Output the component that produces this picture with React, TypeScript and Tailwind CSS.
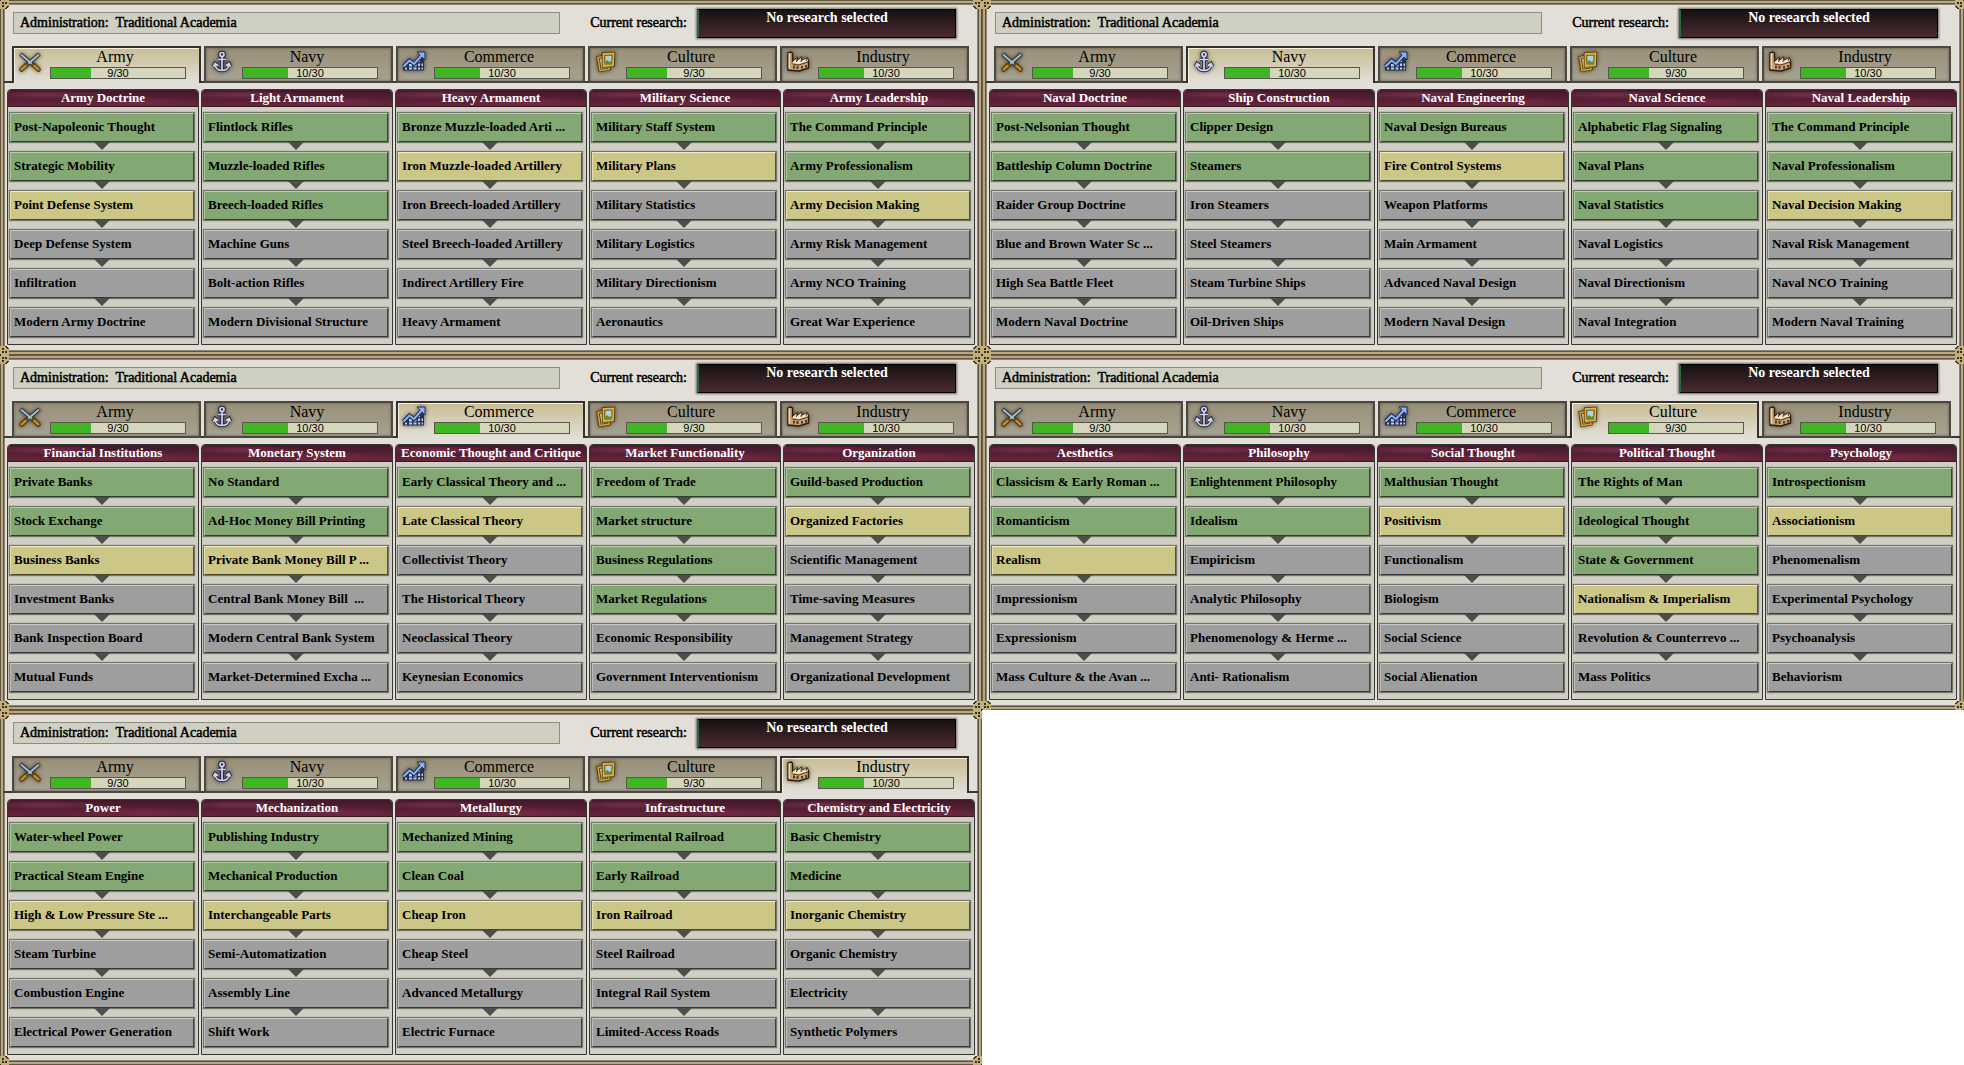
import React from 'react';

type Status = 'g' | 'y' | 'n';
type Column = { title: string; done: number; current: boolean; items: string[] };

const col = (title: string, done: number, current: boolean, ...items: string[]): Column => ({ title, done, current, items });

const tabs = [
  { name: 'Army', count: 9 },
  { name: 'Navy', count: 10 },
  { name: 'Commerce', count: 10 },
  { name: 'Culture', count: 9 },
  { name: 'Industry', count: 10 },
];

const panels: Column[][] = [
  [
    col('Army Doctrine', 2, true, 'Post-Napoleonic Thought', 'Strategic Mobility', 'Point Defense System', 'Deep Defense System', 'Infiltration', 'Modern Army Doctrine'),
    col('Light Armament', 3, false, 'Flintlock Rifles', 'Muzzle-loaded Rifles', 'Breech-loaded Rifles', 'Machine Guns', 'Bolt-action Rifles', 'Modern Divisional Structure'),
    col('Heavy Armament', 1, true, 'Bronze Muzzle-loaded Arti ...', 'Iron Muzzle-loaded Artillery', 'Iron Breech-loaded Artillery', 'Steel Breech-loaded Artillery', 'Indirect Artillery Fire', 'Heavy Armament'),
    col('Military Science', 1, true, 'Military Staff System', 'Military Plans', 'Military Statistics', 'Military Logistics', 'Military Directionism', 'Aeronautics'),
    col('Army Leadership', 2, true, 'The Command Principle', 'Army Professionalism', 'Army Decision Making', 'Army Risk Management', 'Army NCO Training', 'Great War Experience'),
  ],
  [
    col('Naval Doctrine', 2, false, 'Post-Nelsonian Thought', 'Battleship Column Doctrine', 'Raider Group Doctrine', 'Blue and Brown Water Sc ...', 'High Sea Battle Fleet', 'Modern Naval Doctrine'),
    col('Ship Construction', 2, false, 'Clipper Design', 'Steamers', 'Iron Steamers', 'Steel Steamers', 'Steam Turbine Ships', 'Oil-Driven Ships'),
    col('Naval Engineering', 1, true, 'Naval Design Bureaus', 'Fire Control Systems', 'Weapon Platforms', 'Main Armament', 'Advanced Naval Design', 'Modern Naval Design'),
    col('Naval Science', 3, false, 'Alphabetic Flag Signaling', 'Naval Plans', 'Naval Statistics', 'Naval Logistics', 'Naval Directionism', 'Naval Integration'),
    col('Naval Leadership', 2, true, 'The Command Principle', 'Naval Professionalism', 'Naval Decision Making', 'Naval Risk Management', 'Naval NCO Training', 'Modern Naval Training'),
  ],
  [
    col('Financial Institutions', 2, true, 'Private Banks', 'Stock Exchange', 'Business Banks', 'Investment Banks', 'Bank Inspection Board', 'Mutual Funds'),
    col('Monetary System', 2, true, 'No Standard', 'Ad-Hoc Money Bill Printing', 'Private Bank Money Bill P ...', 'Central Bank Money Bill  ...', 'Modern Central Bank System', 'Market-Determined Excha ...'),
    col('Economic Thought and Critique', 1, true, 'Early Classical Theory and ...', 'Late Classical Theory', 'Collectivist Theory', 'The Historical Theory', 'Neoclassical Theory', 'Keynesian Economics'),
    col('Market Functionality', 4, false, 'Freedom of Trade', 'Market structure', 'Business Regulations', 'Market Regulations', 'Economic Responsibility', 'Government Interventionism'),
    col('Organization', 1, true, 'Guild-based Production', 'Organized Factories', 'Scientific Management', 'Time-saving Measures', 'Management Strategy', 'Organizational Development'),
  ],
  [
    col('Aesthetics', 2, true, 'Classicism & Early Roman ...', 'Romanticism', 'Realism', 'Impressionism', 'Expressionism', 'Mass Culture & the Avan ...'),
    col('Philosophy', 2, false, 'Enlightenment Philosophy', 'Idealism', 'Empiricism', 'Analytic Philosophy', 'Phenomenology & Herme ...', 'Anti- Rationalism'),
    col('Social Thought', 1, true, 'Malthusian Thought', 'Positivism', 'Functionalism', 'Biologism', 'Social Science', 'Social Alienation'),
    col('Political Thought', 3, true, 'The Rights of Man', 'Ideological Thought', 'State & Government', 'Nationalism & Imperialism', 'Revolution & Counterrevo ...', 'Mass Politics'),
    col('Psychology', 1, true, 'Introspectionism', 'Associationism', 'Phenomenalism', 'Experimental Psychology', 'Psychoanalysis', 'Behaviorism'),
  ],
  [
    col('Power', 2, true, 'Water-wheel Power', 'Practical Steam Engine', 'High & Low Pressure Ste ...', 'Steam Turbine', 'Combustion Engine', 'Electrical Power Generation'),
    col('Mechanization', 2, true, 'Publishing Industry', 'Mechanical Production', 'Interchangeable Parts', 'Semi-Automatization', 'Assembly Line', 'Shift Work'),
    col('Metallurgy', 2, true, 'Mechanized Mining', 'Clean Coal', 'Cheap Iron', 'Cheap Steel', 'Advanced Metallurgy', 'Electric Furnace'),
    col('Infrastructure', 2, true, 'Experimental Railroad', 'Early Railroad', 'Iron Railroad', 'Steel Railroad', 'Integral Rail System', 'Limited-Access Roads'),
    col('Chemistry and Electricity', 2, true, 'Basic Chemistry', 'Medicine', 'Inorganic Chemistry', 'Organic Chemistry', 'Electricity', 'Synthetic Polymers'),
  ],
];

const statusClass: Record<Status, string> = {
  g: 'bg-[#83a873] border-t-[#b7d0aa] border-l-[#a9c69b] border-r-[#35472e] border-b-[#2d3d27]',
  y: 'bg-[#cdc787] border-t-[#efecc6] border-l-[#e2deae] border-r-[#55522f] border-b-[#4b482a]',
  n: 'bg-[#9e9e9e] border-t-[#c9c9c9] border-l-[#bcbcbc] border-r-[#3f3f3f] border-b-[#383838]',
};

function TabIcon({ name }: { name: string }) {
  const cls = 'size-6 shrink-0 drop-shadow-[0_0_2px_rgba(0,0,0,0.6)]';
  if (name === 'Army')
    return (
      <svg className={cls} viewBox="0 0 24 24" fill="none" aria-hidden="true">
        <path d="M2.500 4 16 15.500M21.500 4 8 15.500" stroke="#2e363e" strokeWidth="4" />
        <path d="M3 4.500 16 15.500M21 4.500 8 15.500" stroke="#a9bfcd" strokeWidth="1.800" />
        <path d="M15.500 15 20.500 19.500M8.500 15 3.500 19.500" stroke="#4e3208" strokeWidth="4.500" strokeLinecap="round" />
        <path d="M15.500 15 20.500 19.500M8.500 15 3.500 19.500" stroke="#c38b2b" strokeWidth="2.400" strokeLinecap="round" />
        <path d="m13.500 16.500 4-3.500M6.500 13l4 3.500" stroke="#6a4913" strokeWidth="1.200" />
      </svg>
    );
  if (name === 'Navy') {
    const d = 'M12 7v14M8 9.500h8M5 14c0 4 3 6.500 7 6.500s7-2.500 7-6.500M3.500 16.500 5 13.500l3 2M20.500 16.500 19 13.500l-3 2';
    return (
      <svg className={cls} viewBox="0 0 24 24" fill="none" aria-hidden="true">
        <g stroke="#23233c" strokeWidth="3.600">
          <circle cx="12" cy="4.500" r="2" />
          <path d={d} />
        </g>
        <g stroke="#cfd2ee" strokeWidth="1.700">
          <circle cx="12" cy="4.500" r="2" />
          <path d={d} />
        </g>
      </svg>
    );
  }
  if (name === 'Commerce')
    return (
      <svg className={cls} viewBox="0 0 24 24" fill="none" aria-hidden="true">
        <path d="M1 20.500v-4l6-5 4 4 6-5 5-3v13z" fill="#27324f" />
        <path d="M3 17.500h2v2H3zM7 14h3v2.500H7zM7 17.500h3v2H7zM11.500 17.500h3v2h-3zM11.500 14.500h3v2h-3zM16 17.500h2v2h-2zM16 13.500h2V16h-2zM19.500 17.500h1.500v2h-1.500zM19.500 13.500h1.500V16h-1.500zM16 10.500h2V12h-2z" fill="#b7cdf4" />
        <path d="m1.500 16.500 6-6 4.500 3.500 8-9" stroke="#1f2e59" strokeWidth="4" />
        <path d="M15 2h8v8z" fill="#8db2f2" stroke="#1f2e59" strokeWidth="1" />
        <path d="m1.500 16.500 6-6 4.500 3.500 8-9" stroke="#8db2f2" strokeWidth="2" />
      </svg>
    );
  if (name === 'Culture')
    return (
      <svg className={cls} viewBox="0 0 24 24" fill="none" aria-hidden="true">
        <path d="m4 7.500 10-1.500 1 13-9 1.500z" fill="#a9c8c4" stroke="#4b3305" strokeWidth="3.200" />
        <path d="m4 7.500 10-1.500 1 13-9 1.500z" stroke="#d8a02a" strokeWidth="1.600" />
        <path d="M9.500 4 19.500 3.500l-.5 12-9.500.5z" fill="#a7d4df" stroke="#4b3305" strokeWidth="3.400" />
        <path d="m10 13 3-3 2.500 2 3.500-2v5l-9 .5z" fill="#69863f" />
        <path d="M9.500 4 19.500 3.500l-.5 12-9.500.5z" stroke="#e2b03c" strokeWidth="1.800" />
      </svg>
    );
  return (
    <svg className={cls} viewBox="0 0 24 24" fill="none" aria-hidden="true">
      <path d="M2 20V3l3-1 1.500 1v9L11 8v3l4.500-3.500V11L21 8l1.500 3v7L13 21z" fill="#c9a577" stroke="#2d1b0c" strokeWidth="1.400" />
      <path d="M2.500 3.500 4 3v16l-1.500-.5z" fill="#ead6b0" />
      <path d="m6.500 12 4.500-4v3l4.500-3.500V11L21 8l1 3-9 3-6.500-1z" fill="#f4e9cf" />
      <path d="m11 8-.5 4M15.500 7.500 15 12M21 8l-1 3M6.500 14l6.500 1 9-3" stroke="#5c3a1c" strokeWidth="1" />
      <path d="M7 15.500h2v3H7zM10.500 16h2v3h-2zM15 16h2v2.500h-2zM19 15h2v2.500h-2z" fill="#59381c" />
    </svg>
  );
}

function Corner({ className }: { className: string }) {
  return (
    <svg className={`absolute size-[9px] ${className}`} viewBox="0 0 9 9" shapeRendering="crispEdges" aria-hidden="true">
      <path d="M0 0h9v6H7v2H6v1H0z" fill="#c4ae7b" />
      <path d="M2 2h2v2H2zM5 2h2v2H5zM2 5h2v2H2zM0 0h1v1H0zM9 6H7v1H6v1H5v1h2V8h1V7h1z" fill="#37311f" />
    </svg>
  );
}

function Progress({ count }: { count: number }) {
  return (
    <div className="relative h-3 border border-[#56564e] bg-[#d5d6bb]" role="progressbar" aria-valuenow={count} aria-valuemax={30}>
      <div className="h-full bg-[#41b625]" style={{ width: `${(count / 30) * 100}%` }} />
      <span className="absolute inset-0 text-center font-['Liberation_Sans'] text-[11px] leading-[10px] text-black">{count}/30</span>
    </div>
  );
}

function TechColumn({ column }: { column: Column }) {
  return (
    <section className="min-w-0 flex-1 rounded-t-sm border border-[#363632] bg-[#cfcfc3] pb-[7px]">
      <h2 className="h-[17px] rounded-t-sm border-b border-[#3c1723] bg-[#5d1f35] bg-[radial-gradient(ellipse_at_20%_30%,#752f49_0%,transparent_30%),radial-gradient(ellipse_at_70%_80%,#702a44_0%,transparent_35%),linear-gradient(#43172a,#65243b)] text-center text-[13px] leading-4 font-bold whitespace-nowrap text-white">
        {column.title}
      </h2>
      <ol className="mt-[6px] pr-[4px] pl-[2px]">
        {column.items.map((item, i) => {
          const status: Status = i < column.done ? 'g' : i === column.done && column.current ? 'y' : 'n';
          return (
            <li key={item} className="group">
              <button
                type="button"
                className={`block h-[29px] w-full overflow-hidden border pb-[2px] pl-[3px] text-left text-[13px] leading-6 font-bold whitespace-pre text-black shadow-[0_0_1px_1px_rgba(70,70,66,0.65)] ${statusClass[status]}`}
              >
                {item}
              </button>
              <svg viewBox="0 0 16 8" className="mx-auto mb-[2px] block h-[8px] w-[16px] group-last:hidden" aria-hidden="true">
                <path d="M0 0h16L8 8z" fill="#4d4d4b" />
              </svg>
            </li>
          );
        })}
      </ol>
    </section>
  );
}

function Panel({ active, columns }: { active: number; columns: Column[] }) {
  return (
    <article className="relative border-4 border-[#5d564a] bg-[#e1dfd8] pb-[6px] shadow-[inset_0_0_0_1px_#8b8470]">
      <div className="pointer-events-none absolute -inset-[3px] border-2 border-[#bea678]" />
      <header className="flex items-start pt-[5px] pr-[22px] pl-[9px]">
        <div className="mt-[3px] h-[22px] flex-1 border border-[#8f8d7f] bg-[#cfd0c2] pl-[6px] text-sm leading-5 whitespace-pre text-black [-webkit-text-stroke:0.5px_black]">
          Administration:  Traditional Academia
        </div>
        <span className="mt-[3px] w-[137px] pr-[10px] text-right text-sm leading-[22px] text-black [-webkit-text-stroke:0.5px_black]">Current research:</span>
        <div className="h-[29px] w-[259px] border border-l-2 border-black border-l-[#276b3a] bg-linear-to-b from-[#171112] to-[#4c2a31] text-center text-sm leading-4 font-bold text-white shadow-[0_0_2px_1px_rgba(60,55,50,0.7)]">
          No research selected
        </div>
      </header>
      <nav className="mt-2 flex gap-[3px] pr-[9px] pl-[8px] shadow-[inset_0_-2px_0_#3a3735]">
        {tabs.map((tab, i) => (
          <button
            key={tab.name}
            type="button"
            aria-pressed={i === active}
            className={
              i === active
                ? 'flex h-[37px] min-w-0 flex-1 border-2 border-b-0 border-[#34312e] bg-linear-to-b from-[#c9bd94] to-[#e1dfd8] pt-[2px] pr-[13px] pl-1 shadow-[inset_1px_1px_0_#f6f1dc]'
                : 'flex h-[37px] min-w-0 flex-1 border-2 border-[#4b4841] bg-linear-to-b from-[#9a9078] to-[#a6a292] pt-[2px] pr-[13px] pl-1 shadow-[inset_0_0_3px_#605a4d]'
            }
          >
            <TabIcon name={tab.name} />
            <span className="ml-2 block min-w-0 flex-1">
              <span className="-mt-px block h-[18px] pr-[6px] text-center text-base leading-4 text-black">{tab.name}</span>
              <Progress count={tab.count} />
            </span>
          </button>
        ))}
      </nav>
      <main className="mt-[6px] flex gap-[2px] px-[3px]">
        {columns.map((c) => (
          <TechColumn key={c.title} column={c} />
        ))}
      </main>
      <Corner className="-top-1 -left-1" />
      <Corner className="-top-1 -right-1 -scale-x-100" />
      <Corner className="-bottom-1 -left-1 -scale-y-100" />
      <Corner className="-right-1 -bottom-1 -scale-100" />
    </article>
  );
}

export default function App() {
  return (
    <div className="grid grid-cols-2 bg-white font-['Liberation_Serif',serif]">
      {panels.map((columns, i) => (
        <Panel key={i} active={i} columns={columns} />
      ))}
    </div>
  );
}
